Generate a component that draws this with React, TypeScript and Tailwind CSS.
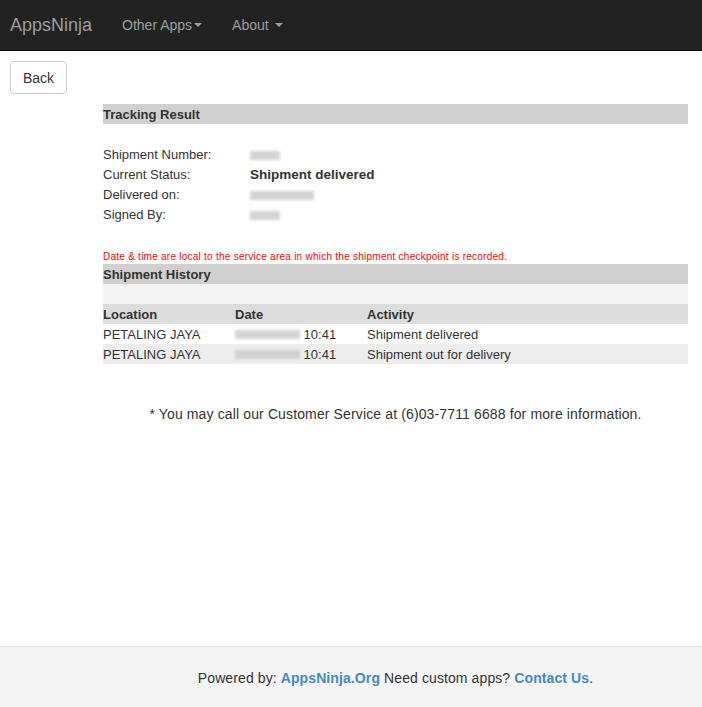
import React from "react";

const Blur = ({ w }: { w: number }) => (
  <span
    className="inline-block align-middle h-[9px] bg-[#cacaca] blur-[1.5px] opacity-80"
    style={{ width: w }}
  />
);

const Caret = () => (
  <span className="inline-block ml-[2px] align-middle w-0 h-0 border-l-[4px] border-r-[4px] border-t-[4px] border-l-transparent border-r-transparent border-t-[#9d9d9d]" />
);

export default function App() {
  return (
    <div
      className="flex flex-col min-h-screen text-[14px] leading-[20px] text-[#333]"
      style={{ fontFamily: '"Liberation Sans", Arial, sans-serif' }}
    >
      <nav className="h-[51px] bg-[#222] border-b border-[#080808] flex items-center text-[#9d9d9d]">
        <span className="pl-[10px] pr-[15px] text-[18px] leading-[20px]">AppsNinja</span>
        <span className="px-[15px] flex items-center">
          Other Apps
          <Caret />
        </span>
        <span className="px-[15px] flex items-center">
          About&nbsp;
          <Caret />
        </span>
      </nav>

      <main className="flex-1 px-[10px] pt-[10px]">
        <button className="h-[33px] w-[57px] border border-[#ccc] rounded-[4px] bg-white text-[#333] text-[14px]">
          Back
        </button>

        <div className="ml-[93px] w-[585px] mt-[10px] text-[13px]">
          <div className="bg-[#d0d0d0] h-[20px] pt-[1px] leading-[19px] font-bold">Tracking Result</div>
          <div className="mt-[20px]">
            <div className="flex h-[20px] items-center pt-[2px]">
              <span className="w-[147px]">Shipment Number:</span>
              <Blur w={30} />
            </div>
            <div className="flex h-[20px] items-center pt-[2px]">
              <span className="w-[147px]">Current Status:</span>
              <span className="font-bold text-[13.5px]">Shipment delivered</span>
            </div>
            <div className="flex h-[20px] items-center pt-[2px]">
              <span className="w-[147px]">Delivered on:</span>
              <Blur w={64} />
            </div>
            <div className="flex h-[20px] items-center pt-[2px]">
              <span className="w-[147px]">Signed By:</span>
              <Blur w={30} />
            </div>
          </div>
          <div className="mt-[25px] text-[10px] leading-[15px] tracking-[0.25px] text-[#ff0000]">
            Date &amp; time are local to the service area in which the shipment checkpoint is recorded.
          </div>
          <div className="bg-[#d0d0d0] h-[20px] pt-[1px] leading-[19px] font-bold">Shipment History</div>
          <div className="bg-[#f4f4f4] h-[20px]" />
          <div className="grid grid-cols-[132px_132px_1fr] bg-[#dcdcdc] h-[20px] pt-[1px] leading-[19px] font-bold">
            <span>Location</span>
            <span>Date</span>
            <span>Activity</span>
          </div>
          <div className="grid grid-cols-[132px_132px_1fr] bg-white h-[20px] pt-[1px] leading-[19px]">
            <span>PETALING JAYA</span>
            <span className="flex items-center">
              <Blur w={65} />
              <span>&nbsp;10:41</span>
            </span>
            <span>Shipment delivered</span>
          </div>
          <div className="grid grid-cols-[132px_132px_1fr] bg-[#ededed] h-[20px] pt-[1px] leading-[19px]">
            <span>PETALING JAYA</span>
            <span className="flex items-center">
              <Blur w={65} />
              <span>&nbsp;10:41</span>
            </span>
            <span>Shipment out for delivery</span>
          </div>
          <p className="mt-[40px] text-center text-[14px] tracking-[0.13px]">
            * You may call our Customer Service at (6)03-7711 6688 for more information.
          </p>
        </div>
      </main>

      <footer className="h-[61px] bg-[#f4f4f4] border-t border-[#e5e5e5] flex items-center">
        <div className="ml-[103px] w-[585px] text-center pt-[1px] tracking-[0.1px]">
          Powered by: <a className="font-bold text-[#428bca]">AppsNinja.Org</a> Need custom apps?{" "}
          <a className="font-bold text-[#428bca]">Contact Us</a>.
        </div>
      </footer>
    </div>
  );
}
